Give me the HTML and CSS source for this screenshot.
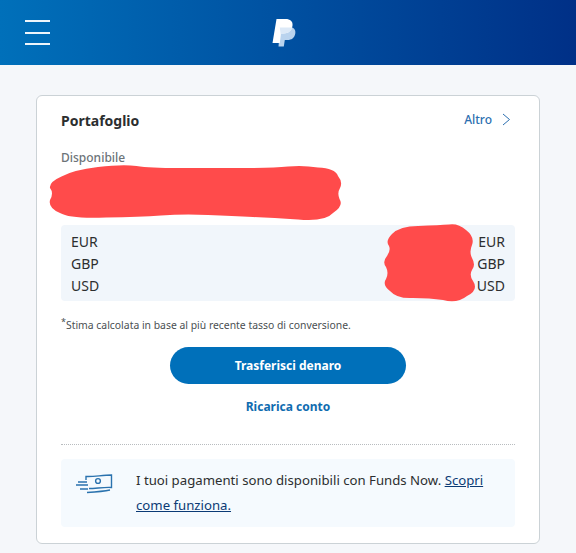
FILE: index.html
```
<!DOCTYPE html>
<html>
<head>
    <title>Portafoglio</title>
    <link rel="stylesheet" href="styles.css">
</head>
<body>
    <header class="topbar">
        <button class="menu_btn"><span></span><span></span><span></span></button>
        <svg class="logo" width="24" height="28" viewBox="0 0 24 28">
            <path fill="#b9d3ee" d="M8 8h9c4.500 0 7 2.500 6.300 6.500C22.500 19 19.500 21 15.500 21h-2.700l-1 6.500H6.500z"/>
            <path fill="#ffffff" d="M4.500 0h9c4.700 0 7.600 2.300 7 6.800-.8 5.200-4.300 7.700-9 7.700H9l-1.200 9.500H.5z"/>
            <path fill="#dce9f7" d="M7.800 8.500h12.500c-1.200 3.900-4.400 6-8.800 6H9L7.700 24l1-8z"/>
        </svg>
    </header>

    <main class="page">
        <section class="card">
            <div class="card_head">
                <h2>Portafoglio</h2>
                <a class="more" href="#">Altro
                    <svg width="9" height="13" viewBox="0 0 9 13"><path d="M1 1l6.500 5.500L1 12" fill="none" stroke="#2c6fb0" stroke-width="1"/></svg>
                </a>
            </div>
            <p class="label">Disponibile</p>
            <ul class="balances">
                <li><span>EUR</span><span>EUR</span></li>
                <li><span>GBP</span><span>GBP</span></li>
                <li><span>USD</span><span>USD</span></li>
            </ul>
            <p class="note"><sup>*</sup>Stima calcolata in base al più recente tasso di conversione.</p>
            <div class="actions">
                <a class="bouton_transfer" href="#">Trasferisci denaro</a>
                <a class="link_topup" href="#">Ricarica conto</a>
            </div>
            <div class="funds_box">
                <svg class="funds_icon" width="38" height="20" viewBox="0 0 38 20" fill="none" stroke="#2a72ae" stroke-width="1.400">
                    <path d="M10 6V2.500C18 3 26 1 35.500 1v12.500C28 13 20 14.500 13 14.500"/>
                    <path d="M11 18.500c8-.5 16-1 23-2.500"/>
                    <path d="M2 8h9M0 11h12M4 15h8"/>
                    <circle cx="22" cy="7" r="2.400"/>
                </svg>
                <p>I tuoi pagamenti sono disponibili con Funds Now. <a href="#">Scopri come funziona.</a></p>
            </div>
        </section>
    </main>

    <!-- scarabocchi rossi sopra gli importi -->
    <svg class="scribble" width="576" height="553" viewBox="0 0 576 553" fill="#ff4b4b">
        <path d="M61.500 176.500Q73 170 98 167Q123 164 136.500 166Q150 168 178.500 168Q207 168 240 168Q273 168 288 166.500Q303 165 318 167.500Q335 168 338 176Q343 182 340 188Q337 193 339.500 199Q344 206 333 213Q325 222 298 219.500Q273 218 253 217Q233 216 208 215Q183 214 161 215.500Q140 217 106 217.500Q70 219 60 213Q48 208 50 200Q54 193 50 188Q49 182 61.500 176.500Z"/>
        <path d="M392 234Q400 226 418 226Q440 225 449 224.500Q458 223 466 230Q475 237 472 245Q469 252 472 258Q476 265 472 270Q469 275 473 281Q479 290 467 296Q457 304 443 300Q430 298 413 298Q397 299 390 291Q382 285 386 279Q389 273 386 267Q382 262 387 256Q391 250 389 246Q385 241 392 234Z"/>
    </svg>
</body>
</html>
```

FILE: styles.css
```
body {
    margin: 0;
    background-color: #f5f7fa;
    font-family: "Noto Sans", "Open Sans", sans-serif;
    color: #2c2e2f;
}
.topbar {
    height: 65px;
    display: flex;
    align-items: center;
    justify-content: center;
    position: relative;
    background: linear-gradient(90deg, #0070ba 0%, #003087 100%);
}
.menu_btn {
    position: absolute;
    left: 25px;
    top: 20px;
    width: 25px;
    height: 25px;
    padding: 0;
    border: 0;
    background: none;
    display: flex;
    flex-direction: column;
    justify-content: space-between;
}
.menu_btn span {
    display: block;
    height: 2px;
    background-color: #eef5fb;
}
.logo {
    margin-left: -8px;
    margin-top: 1px;
}
.page {
    padding: 30px 36px 0;
}
.card {
    height: 447px;
    padding: 0 24px;
    border: 1px solid #cbd2d6;
    border-radius: 6px;
    background-color: #fff;
}
.card_head {
    display: flex;
    justify-content: space-between;
    align-items: center;
    padding-top: 14px;
    height: 21px;
}
.card_head h2 {
    margin: 0;
    font-size: 14px;
    font-weight: 700;
}
.more {
    display: flex;
    align-items: center;
    gap: 10px;
    margin-right: 4px;
    margin-top: -2px;
    color: #2c6fb0;
    font-size: 12px;
    font-weight: 500;
    text-decoration: none;
}
.label {
    margin: 19px 0 0;
    height: 75px;
    font-size: 12px;
    line-height: 16px;
    font-weight: 500;
    color: #6c7378;
}
.balances {
    margin: 0;
    padding: 6px 10px 4px;
    list-style: none;
    background-color: #f1f6fb;
    border-radius: 4px;
}
.balances li {
    display: flex;
    justify-content: space-between;
    font-size: 14px;
    line-height: 22px;
}
.note {
    margin: 15px 0 0;
    font-size: 10.400px;
    line-height: 18px;
    color: #4a4f52;
}
.note sup {
    font-size: 9px;
    line-height: 0;
}
.actions {
    display: flex;
    flex-direction: column;
    align-items: center;
    margin-top: 13px;
    padding-bottom: 29px;
    border-bottom: 1px dotted #b8bcbf;
}
.bouton_transfer {
    width: 236px;
    height: 37px;
    line-height: 37px;
    border-radius: 19px;
    background-color: #0070ba;
    color: #fff;
    text-align: center;
    font-size: 12px;
    font-weight: 700;
    text-decoration: none;
}
.link_topup {
    margin-top: 15px;
    color: #0f6cb0;
    font-size: 12px;
    line-height: 16px;
    font-weight: 700;
    text-decoration: none;
}
.funds_box {
    display: flex;
    gap: 22px;
    margin-top: 14px;
    height: 68px;
    box-sizing: border-box;
    padding: 9px 15px;
    background-color: #f5fafe;
    border-radius: 4px;
}
.funds_icon {
    flex: none;
    margin-top: 6px;
}
.funds_box p {
    margin: 0;
    font-size: 13.200px;
    line-height: 25px;
}
.funds_box a {
    color: #0b3a75;
}
.scribble {
    position: absolute;
    left: 0;
    top: 0;
}
```
